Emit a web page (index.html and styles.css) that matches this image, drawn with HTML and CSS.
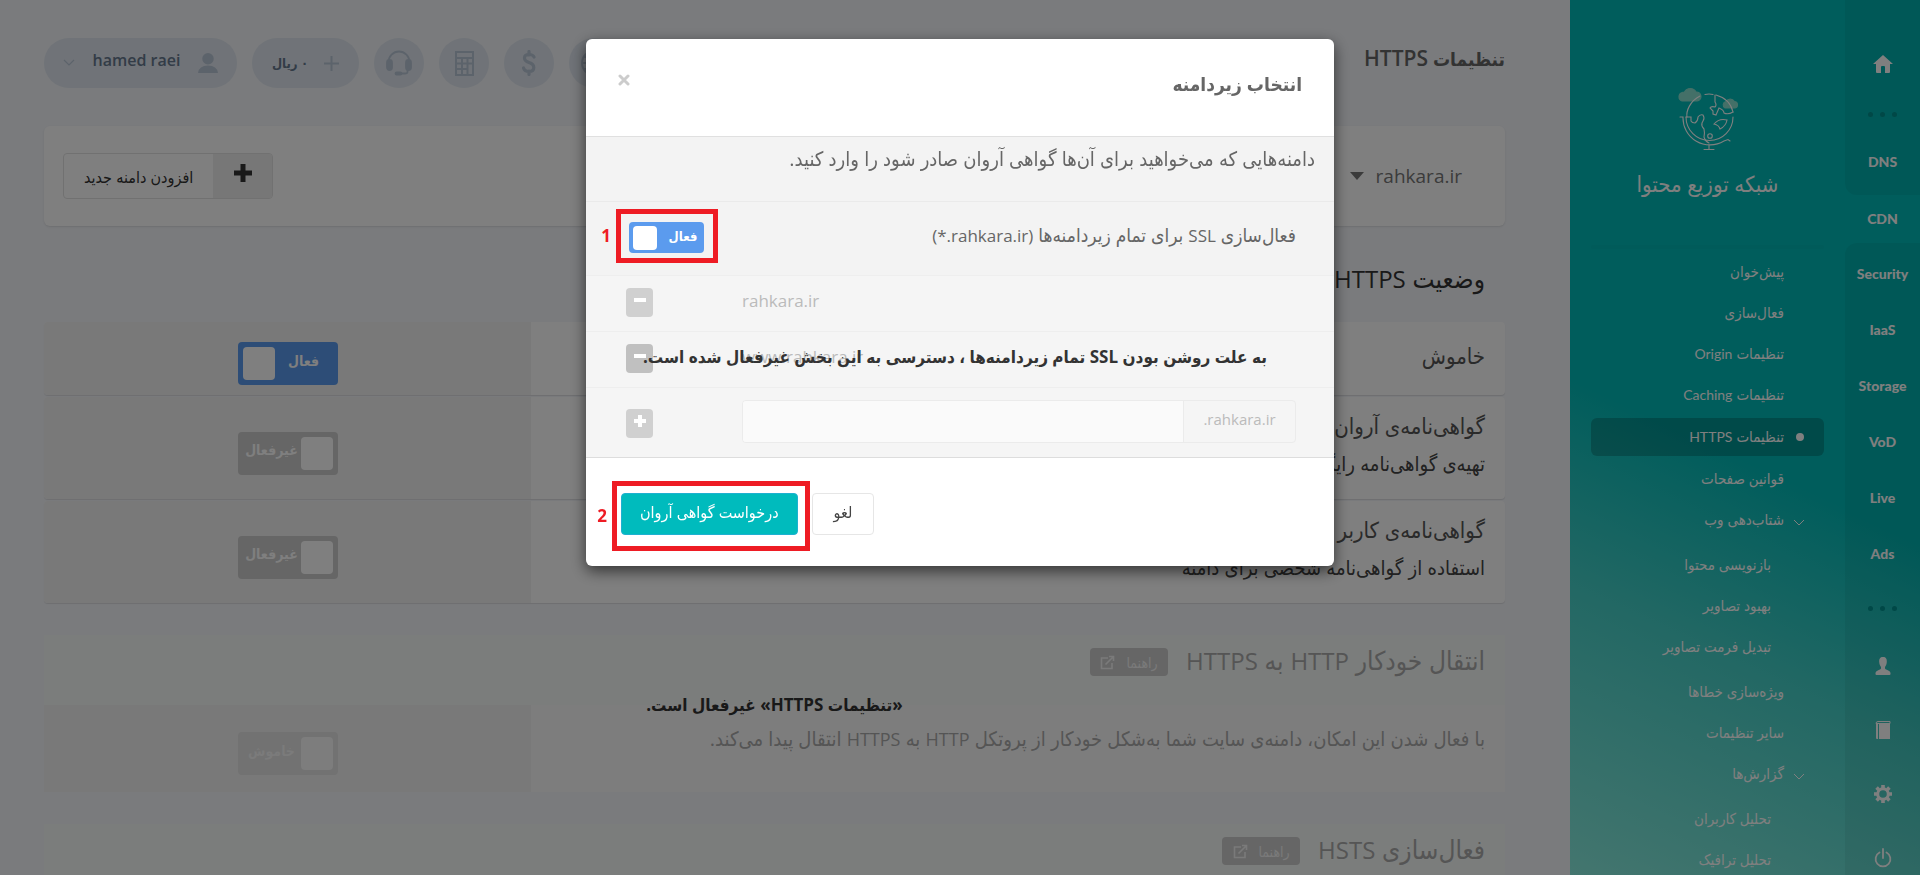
FILE: index.html
```html
<!DOCTYPE html>
<html dir="rtl" lang="fa">
<head>
<meta charset="utf-8">
<title>تنظیمات HTTPS</title>
<link rel="stylesheet" href="styles.css">
</head>
<body>
<div class="shell">
  <div class="sidebar">
    <nav class="rail">
      <div class="rail-top">
        <a href="#" class="rail-icon rail-home" aria-label="خانه"><svg width="20" height="18" viewBox="0 0 20 18"><path d="M10 0L20 9H17V17Q17 18 16 18H12V12Q12 11 11 11H9Q8 11 8 12V18H4Q3 18 3 17V9H0Z"/></svg></a>
        <div class="dots"><i></i><i></i><i></i></div>
        <a href="#" class="rail-link">DNS</a>
      </div>
      <a href="#" class="rail-link rail-active">CDN</a>
      <div class="rail-bottom">
        <a href="#" class="rail-link">Security</a>
        <a href="#" class="rail-link">IaaS</a>
        <a href="#" class="rail-link">Storage</a>
        <a href="#" class="rail-link">VoD</a>
        <a href="#" class="rail-link">Live</a>
        <a href="#" class="rail-link">Ads</a>
        <div class="dots"><i></i><i></i><i></i></div>
        <a href="#" class="rail-icon" aria-label="حساب"><svg width="16" height="18" viewBox="0 0 16 18"><path d="M8 0C11 0 12 2 11.800 5C11.600 8 10.500 9 10 10V11.500C10.500 13 15 13 15.500 16V17Q15.500 18 14.500 18H1.500Q.5 18 .5 17V16C1 13 5.500 13 6 11.500V10C5.500 9 4.400 8 4.200 5C4 2 5 0 8 0Z"/></svg></a>
        <a href="#" class="rail-icon" aria-label="مستندات"><svg width="16" height="18" viewBox="0 0 16 18"><path d="M1 2.500Q1 .5 3 .5H15V2.500H3" fill="none" stroke="#fff"/><path d="M1 2H3V18H2Q1 18 1 17ZM4 3H15V18H4Z"/></svg></a>
        <a href="#" class="rail-icon" aria-label="تنظیمات"><svg width="18" height="18" viewBox="0 0 18 18"><circle cx="9" cy="9" r="5.300" fill="none" stroke="#fff" stroke-width="3"/><path d="M9 0V3M9 15V18M0 9H3M15 9H18M2.600 2.600L4.700 4.700M13.300 13.300L15.400 15.400M15.400 2.600L13.300 4.700M4.700 13.300L2.600 15.400" stroke="#fff" stroke-width="3.600"/></svg></a>
        <a href="#" class="rail-icon" aria-label="خروج"><svg width="18" height="20" viewBox="0 0 18 20"><path d="M5.500 4.500A7.400 7.400 0 1 0 12.500 4.500M9 1V10" fill="none" stroke="#fff" stroke-width="1.800" stroke-linecap="round"/></svg></a>
      </div>
    </nav>
    <div class="menu">
      <div class="brand">
        <svg width="64" height="64" viewBox="0 0 64 64" fill="none" stroke="#fff" stroke-width="1.100" stroke-linecap="round">
          <path d="M6 18A4.500 4.500 0 0 1 6 9.500Q7 9 8.500 9A6.500 6.500 0 0 1 20 9A4.500 4.500 0 0 1 21 18ZM49 25A3.500 3.500 0 0 1 50 18.500A5 5 0 0 1 58.500 18.500A3.300 3.300 0 0 1 59 25Z" fill="#88e0d0" stroke="#88e0d0" transform="translate(0 -3)"/>
          <path d="M11 31C10 25 14 15 24 10M29 8.500Q33 7.500 37 8.500M40 9Q54 13 57 26M57 31A23 23 0 1 1 10 31"/>
          <path d="M4 31H7A27 27 0 0 0 48 55L52 53.500L54 55M33 59V63.500M28 63.500H38"/>
          <path d="M10 31H15V35Q16 37 19 37Q22 35 22 31Q24 28 27 29Q29 32 27 35L26 37Q25 40 28 43Q29 47 28 51Q29 55 33 57"/>
          <path d="M39 9V16Q41 19 39 21Q35 20 34 22L37 25V28L40 29L43 22Q48 24 48 27Q52 29 57 26"/>
          <path d="M38 38Q43 32 51 34Q50 40 44 43Q43 39 38 38Z"/><circle cx="34" cy="50" r="2.300"/>
        </svg>
        <div class="brand-name">شبکه توزیع محتوا</div>
      </div>
      <hr class="menu-line">
      <ul class="menu-list">
        <li><a href="#">پیش‌خوان</a></li>
        <li><a href="#">فعال‌سازی</a></li>
        <li><a href="#">تنظیمات <bdi>Origin</bdi></a></li>
        <li><a href="#">تنظیمات <bdi>Caching</bdi></a></li>
        <li class="current"><a href="#"><i class="bullet"></i>تنظیمات <bdi>HTTPS</bdi></a></li>
        <li><a href="#">قوانین صفحات</a></li>
        <li><a href="#"><svg class="chev" width="12" height="8" viewBox="0 0 12 8"><path d="M1 1L6 6L11 1"/></svg>شتاب‌دهی وب</a>
          <ul>
            <li><a href="#">بازنویسی محتوا</a></li>
            <li><a href="#">بهبود تصاویر</a></li>
            <li><a href="#">تبدیل فرمت تصاویر</a></li>
          </ul>
        </li>
        <li><a href="#">ویژه‌سازی خطاها</a></li>
        <li><a href="#">سایر تنظیمات</a></li>
        <li><a href="#"><svg class="chev" width="12" height="8" viewBox="0 0 12 8"><path d="M1 1L6 6L11 1"/></svg>گزارش‌ها</a>
          <ul>
            <li><a href="#">تحلیل کاربران</a></li>
            <li><a href="#">تحلیل ترافیک</a></li>
          </ul>
        </li>
      </ul>
    </div>
  </div>

  <main class="main">
    <header class="topbar">
      <h1>تنظیمات <bdi>HTTPS</bdi></h1>
      <div class="tools">
        <button class="round" aria-label="زبان"><svg width="26" height="26" viewBox="0 0 26 26"><path d="M13 1A12 12 0 1 0 13 25A12 12 0 1 0 13 1ZM1 13H25M13 1V25M3 7H23M3 19H23M13 1Q3 13 13 25Q23 13 13 1" fill="none" stroke="#b9c6d6" stroke-width="2"/></svg></button>
        <button class="round" aria-label="تعرفه"><svg width="14" height="26" viewBox="0 0 14 26"><path d="M12 7Q11 4.500 7 4.500Q2.500 4.500 2.500 8Q2.500 11 7 12.500Q11.800 14 11.800 17.500Q11.800 21.500 7 21.500Q2.500 21.500 1.500 18M7 1.500V5M7 21V24.500" fill="none" stroke="#b9c6d6" stroke-width="3.200" stroke-linecap="round"/></svg></button>
        <button class="round" aria-label="ماشین حساب"><svg width="19" height="25" viewBox="0 0 19 25"><path d="M0 0H19V25H0ZM2 2V6H17V2ZM2 8V11.500H6V8ZM8 8V11.500H11.500V8ZM13.500 8V11.500H17V8ZM2 13.500V17H6V13.500ZM8 13.500V17H11.500V13.500ZM13.500 13.500V23H17V13.500ZM2 19V23H6V19ZM8 19V23H11.500V19Z" fill="#b9c6d6" fill-rule="evenodd"/></svg></button>
        <button class="round" aria-label="پشتیبانی"><svg width="26" height="26" viewBox="0 0 26 26" fill="none" stroke="#b9c6d6" stroke-width="1.800"><path d="M2.500 12A10.500 10.500 0 0 1 23.500 12M21.500 19V22Q21.500 23.500 19 23.500H14"/><rect x="1" y="10" width="5" height="10" rx="2.500" fill="#b9c6d6"/><rect x="20" y="10" width="5" height="10" rx="2.500" fill="#b9c6d6"/><rect x="9.500" y="22.500" width="6" height="2" rx="1" fill="#b9c6d6"/></svg></button>
        <button class="pill credit"><svg width="15" height="15" viewBox="0 0 15 15"><path d="M7.500 0V15M0 7.500H15" stroke="#b9c6d6" stroke-width="2"/></svg><b>۰ ریال</b></button>
        <button class="pill user"><svg width="20" height="20" viewBox="0 0 20 20"><path d="M10 0A5.500 5.500 0 0 1 10 11.500A5.500 5.500 0 0 1 10 0M0 20Q1 12.500 10 12.500Q19 12.500 20 20Z" fill="#b9c6d6"/></svg><b>hamed raei</b><svg class="user-chev" width="12" height="8" viewBox="0 0 12 8"><path d="M1 1L6 6L11 1" fill="none" stroke="#b9c6d6" stroke-width="1.200"/></svg></button>
      </div>
    </header>

    <section class="card domain">
      <button class="domain-pick"><bdi>rahkara.ir</bdi><svg width="14" height="8" viewBox="0 0 14 8"><path d="M0 0H14L7 8Z"/></svg></button>
      <button class="add"><span class="add-icon"><svg width="18" height="18" viewBox="0 0 18 18"><path d="M9 0V18M0 9H18" stroke="#333" stroke-width="5"/></svg></span><span class="add-text">افزودن دامنه جدید</span></button>
    </section>

    <h2 class="section-title">وضعیت <bdi>HTTPS</bdi></h2>
    <section class="rows">
      <div class="row row-short">
        <div class="row-text"><h3>خاموش</h3></div>
        <div class="row-side"><label class="switch on"><span>فعال</span><input type="checkbox" checked></label></div>
      </div>
      <div class="row">
        <div class="row-text"><h3>گواهی‌نامه‌ی آروان</h3><p>تهیه‌ی گواهی‌نامه رایگان برای دامنه</p></div>
        <div class="row-side"><label class="switch"><input type="checkbox"><span>غیرفعال</span></label></div>
      </div>
      <div class="row">
        <div class="row-text"><h3>گواهی‌نامه‌ی کاربر</h3><p>استفاده از گواهی‌نامه شخصی برای دامنه</p></div>
        <div class="row-side"><label class="switch"><input type="checkbox"><span>غیرفعال</span></label></div>
      </div>
    </section>

    <section class="option">
      <div class="option-head"><h2>انتقال خودکار <bdi>HTTP</bdi> به <bdi>HTTPS</bdi></h2><a href="#" class="help"><span>راهنما</span><svg width="15" height="15" viewBox="0 0 15 15"><path d="M8 3H1.500V13.500H12V8M5.500 9.500L13 2M9 1.500H13.500V6" /></svg></a></div>
      <div class="option-body">
        <p class="option-text">با فعال شدن این امکان، دامنه‌ی سایت شما به‌شکل خودکار از پروتکل <bdi>HTTP</bdi> به <bdi>HTTPS</bdi> انتقال پیدا می‌کند.</p>
        <div class="row-side"><label class="switch faded"><input type="checkbox" disabled><span>خاموش</span></label></div>
      </div>
      <p class="option-note">«تنظیمات <bdi>HTTPS</bdi>» غیرفعال است.</p>
    </section>

    <section class="option">
      <div class="option-head"><h2>فعال‌سازی <bdi>HSTS</bdi></h2><a href="#" class="help"><span>راهنما</span><svg width="15" height="15" viewBox="0 0 15 15"><path d="M8 3H1.500V13.500H12V8M5.500 9.500L13 2M9 1.500H13.500V6" /></svg></a></div>
    </section>
  </main>
</div>

<div class="backdrop">
  <div class="modal" role="dialog" aria-labelledby="dlg">
    <div class="modal-head">
      <h2 id="dlg">انتخاب زیردامنه</h2>
      <button class="close" aria-label="بستن"><svg width="12" height="12" viewBox="0 0 12 12"><path d="M2 2L10 10M10 2L2 10" stroke="#ccc" stroke-width="3" stroke-linecap="round"/></svg></button>
    </div>
    <p class="modal-lead">دامنه‌هایی که می‌خواهید برای آن‌ها گواهی آروان صادر شود را وارد کنید.</p>
    <div class="modal-switch">
      <label for="all">فعال‌سازی <bdi>SSL</bdi> برای تمام زیردامنه‌ها <bdi dir="ltr">(*.rahkara.ir)</bdi></label>
      <label class="switch small on"><span>فعال</span><input id="all" type="checkbox" checked></label>
      <div class="mark mark-one"><b>1</b></div>
    </div>
    <div class="locked">
      <div class="sub"><span class="sub-name" dir="ltr">rahkara.ir</span><button class="sq" disabled aria-label="حذف"><svg width="14" height="14" viewBox="0 0 14 14"><path d="M1 7H13"/></svg></button></div>
      <div class="sub"><span class="sub-name" dir="ltr">www.rahkara.ir</span><button class="sq dark" disabled aria-label="حذف"><svg width="14" height="14" viewBox="0 0 14 14"><path d="M1 7H13"/></svg></button></div>
      <div class="sub sub-new"><div class="group"><label for="new" dir="ltr">.rahkara.ir</label><input id="new" type="text" disabled></div><button class="sq" disabled aria-label="افزودن"><svg width="14" height="14" viewBox="0 0 14 14"><path d="M1 7H13M7 1V13"/></svg></button></div>
      <p class="locked-note">به علت روشن بودن <bdi>SSL</bdi> تمام زیردامنه‌ها ، دسترسی به این بخش غیرفعال شده است.</p>
    </div>
    <div class="modal-foot">
      <button class="btn">لغو</button>
      <button class="btn primary">درخواست گواهی آروان</button>
      <div class="mark mark-two"><b>2</b></div>
    </div>
  </div>
</div>
</body>
</html>
```
FILE: styles.css
```css
*{box-sizing:border-box}
body{margin:0;overflow:hidden;font-family:"Open Sans","DejaVu Sans Condensed","DejaVu Sans",sans-serif;font-size:16px;color:#333}
h1,h2,h3,p,ul{margin:0;padding:0;font-weight:400}
ul{list-style:none}
a{color:inherit;text-decoration:none}
button{font:inherit;color:inherit;border:0;padding:0;background:none}
svg{display:block;flex:none}
.shell{display:flex;height:100vh;background:#f4f6fa}

/* sidebar */
.sidebar{flex:none;width:350px;display:flex;overflow:hidden;color:#fff;background:linear-gradient(205deg,#00bab8 0,#00bab8 52%,#45d0c8 72%,#88ecde 100%);font-family:Lato,"DejaVu Sans Condensed","DejaVu Sans",sans-serif}
.rail{width:75px;display:flex;flex-direction:column}
.rail-top{flex:none;height:195px;padding-top:50px;background:rgba(0,0,0,.05);border-bottom-left-radius:12px}
.rail-bottom{flex:1 0 auto;padding-top:3px;background:rgba(0,0,0,.05);border-top-left-radius:12px}
.rail-link{display:flex;align-items:center;justify-content:center;flex:none;height:56px;padding-bottom:2px;font-size:14px;font-weight:900}
.rail-active{height:48px}
.rail-icon{display:flex;align-items:center;justify-content:center;height:64px;fill:#fff}
.rail-home{height:28px}
.rail-top .dots{height:56px;padding-top:17px}
.dots{display:flex;align-items:center;justify-content:center;gap:7px;height:52px}
.dots i{width:5px;height:5px;border-radius:50%;background:#00908e}
.menu{flex:1;padding:86px 21px 0}
.brand{display:flex;flex-direction:column;align-items:center;gap:16px}
.brand-name{font-size:22px;line-height:36px}
.menu-line{height:4px;margin:43px 0 5px;border:0;border-radius:2px;background:rgba(0,0,0,.02)}
.menu-list a{position:relative;display:flex;align-items:center;gap:4px;height:36px;padding:0 40px 2px 0;font-size:15px;border-radius:6px;margin-bottom:5px}
.menu-list bdi{font-size:14px}
.menu-list ul{padding:4px 13px 4px 0}
.menu-list .current a{height:38px;background:rgba(0,0,0,.2)}
.bullet{position:absolute;right:20px;top:15px;width:8px;height:8px;border-radius:50%;background:#fff}
.chev{position:absolute;right:19px;top:17px;fill:none;stroke:#fff}

/* main */
.main{flex:1;min-width:0;padding:38px 65px 0 44px}
.topbar{display:flex;justify-content:space-between;height:50px}
.topbar h1{font-size:19px;font-weight:600;line-height:40px;color:#666}
.topbar h1 bdi{font-size:21px}
.tools{display:flex;gap:15px}
.round,.pill{height:50px;border-radius:25px;background:#e0e7f0;display:flex;align-items:center;justify-content:center}
.round{width:50px}
.pill b{color:#66788e}
.credit{width:107px;gap:16px}
.credit b{font-size:13px}
.user{width:193px;gap:18px}
.user b{font-size:16px;font-weight:600;padding-bottom:6px}
.card{background:#fff;border-radius:6px;box-shadow:0 1px 2px rgba(0,0,0,.1)}
.domain{display:flex;justify-content:space-between;align-items:center;height:100px;margin-top:38px;padding:0 43px 0 19px}
.domain-pick{display:flex;align-items:center;gap:12px;font-size:19px;color:#777;fill:#777}
.add{display:flex;height:46px;border:1px solid #e2e2e2;border-radius:4px;overflow:hidden}
.add-icon{width:59px;display:flex;align-items:center;justify-content:center;padding-bottom:6px;background:#eee}
.add-text{padding:0 20px;font-size:16px;line-height:46px}
.section-title{height:96px;padding:14px 20px 0 0;font-size:26px;line-height:76px}
.section-title bdi,.option-head bdi{font-size:24px}
.rows{display:grid;gap:2px}
.row{display:flex;min-height:102px;background:#fff;border-radius:4px;overflow:hidden;box-shadow:0 1px 1px rgba(0,0,0,.1)}
.row-short{min-height:73px}
.row-text{flex:1;padding:8px 20px}
.row h3{font-size:22px;line-height:40px;color:#555}
.row p{font-size:20px;line-height:38px;color:#444}
.row-short .row-text{padding-top:13px}
.row-side{flex:none;width:33.333%;display:flex;align-items:center;justify-content:center;padding-top:10px;background:#f3f3f3}
.switch{display:flex;align-items:center;width:100px;height:43px;padding:0 5px;border-radius:4px;background:#ccc;color:#fff;font-size:14px;font-weight:700}
.switch span{flex:1;text-align:center;padding-bottom:7px}
.switch input{appearance:none;flex:none;width:32px;height:33px;margin:0;border-radius:4px;background:#fff}
.on{background:#5b9bee}
.faded{background:#e4e4e4;color:#f6f6f6}
.faded input{background:#fafafa}
.option{position:relative;margin-top:32px;background:#fbfbfb}
.option-head{display:flex;align-items:flex-start;gap:18px;height:70px;padding:7px 20px 0;background:#f7faf8;color:#aaa}
.option-head h2{font-size:26px;line-height:36px}
.help{display:flex;align-items:center;justify-content:center;gap:11px;width:78px;height:28px;margin-top:6px;border-radius:4px;background:#ccc;color:#f4f4f4;font-size:14px}
.help svg{fill:none;stroke:#f4f4f4;stroke-width:1.6}
.option-body{display:flex;min-height:87px}
.option-text{flex:1;padding:16px 20px;font-size:20px;line-height:36px;color:#aaa}
.option-text bdi{font-size:18px}
.option-note{position:absolute;top:52px;left:0;right:0;text-align:center;font-size:17px;font-weight:700;line-height:36px;color:#333}

/* dialog */
.backdrop{position:fixed;inset:0;background:rgba(0,0,0,.5)}
.modal{width:748px;margin:39px auto 0;background:#fff;border-radius:6px;box-shadow:0 5px 15px rgba(0,0,0,.6);color:#666}
.modal-head{display:flex;justify-content:space-between;align-items:center;height:98px;padding:0 32px 8px 32px;border-bottom:1px solid #e0e0e0}
.modal-head h2{font-size:19px;font-weight:700}
.close{padding-bottom:8px}
.modal-lead{height:64px;padding:0 19px;font-size:20px;line-height:44px;background:#f3f3f3}
.modal-switch{position:relative;display:flex;justify-content:space-between;align-items:center;height:74px;padding:0 38px 2px 43px;border-top:1px solid #eaeaea;background:#f3f3f3;font-size:19px}
.modal-switch>label:first-child{padding-bottom:5px}
.modal-switch bdi{font-size:17px}
.small{width:75px;height:31px;padding:0 4px;font-size:13px}
.small input{width:24px;height:24px}
.small span{padding:0 0 3px 9px}
.mark{position:absolute;border:5px solid #ee1c24;color:#ee1c24;pointer-events:none}
.mark b{position:absolute;right:100%;top:50%;margin:-12px 10px 0 0;line-height:24px;font-size:17px}
.mark-one{left:30px;top:7px;width:102px;height:54px}
.mark-two{left:26px;top:23px;width:198px;height:70px}
.locked{position:relative;background:#f5f5f5;border-bottom:1px solid #ddd}
.sub{display:flex;justify-content:space-between;align-items:center;height:56px;padding:0 38px 2px 40px;border-top:1px solid #eee}
.sub-name{flex:1;margin-left:89px;padding-bottom:5px;font-size:17px;color:#bbb}
.sub-new{height:70px}
.sq{display:flex;justify-content:center;width:27px;height:29px;padding-top:5px;border-radius:4px;background:#d0d0d0}
.sq.dark{background:#c0c0c0}
.sub-new .sq{margin-top:4px}
.sq svg{fill:none;stroke:#fff;stroke-width:4}
.group{flex:1;display:flex;height:43px;margin-left:89px;border:1px solid #ebebeb;border-radius:4px;overflow:hidden}
.group label{width:111px;text-align:center;line-height:36px;font-size:15px;color:#bbb}
.group input{flex:1;min-width:0;border:0;border-right:1px solid #ebebeb;background:#fafafa}
.locked-note{position:absolute;top:64px;left:57px;right:67px;font-size:17px;font-weight:700;line-height:36px;color:#333;white-space:nowrap}
.modal-foot{position:relative;display:flex;justify-content:flex-end;gap:14px;height:108px;padding:35px 0 0 35px}
.btn{height:42px;padding:0 21px 4px;border:1px solid #e6e6e6;border-radius:4px;font-size:16px;color:#444}
.primary{padding:0 18px 4px;background:#00bbbd;border-color:#1fb0d0;color:#fff}
```
